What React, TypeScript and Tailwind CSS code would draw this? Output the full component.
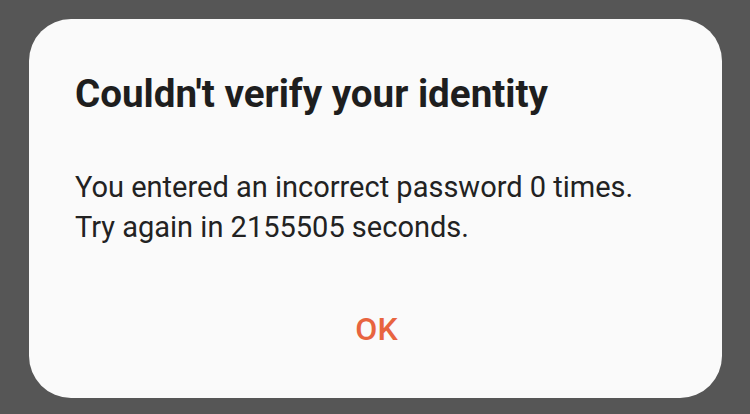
export default function App() {
  return (
    <div className="w-[750px] h-[414px] bg-[#565656] pt-[19px] pl-[29px]" style={{ fontFamily: 'Roboto, "Liberation Sans", sans-serif' }}>
      <div className="w-[693px] h-[379px] bg-[#fafafa] rounded-[42px] flex flex-col pl-[46px] pr-[20px]">
        <h1 className="mt-[53px] text-[38.6px] leading-[44px] font-bold text-[#1e1e1e] whitespace-nowrap">Couldn't verify your identity</h1>
        <p className="mt-[51px] text-[29px] leading-[40px] text-[#222222] whitespace-nowrap">
          You entered an incorrect password 0 times.
          <br />
          Try again in 2155505 seconds.
        </p>
        <div className="flex justify-center mt-[62px] pr-[24px]">
          <button className="text-[32px] leading-[40px] font-medium text-[#e8643f]">OK</button>
        </div>
      </div>
    </div>
  );
}
